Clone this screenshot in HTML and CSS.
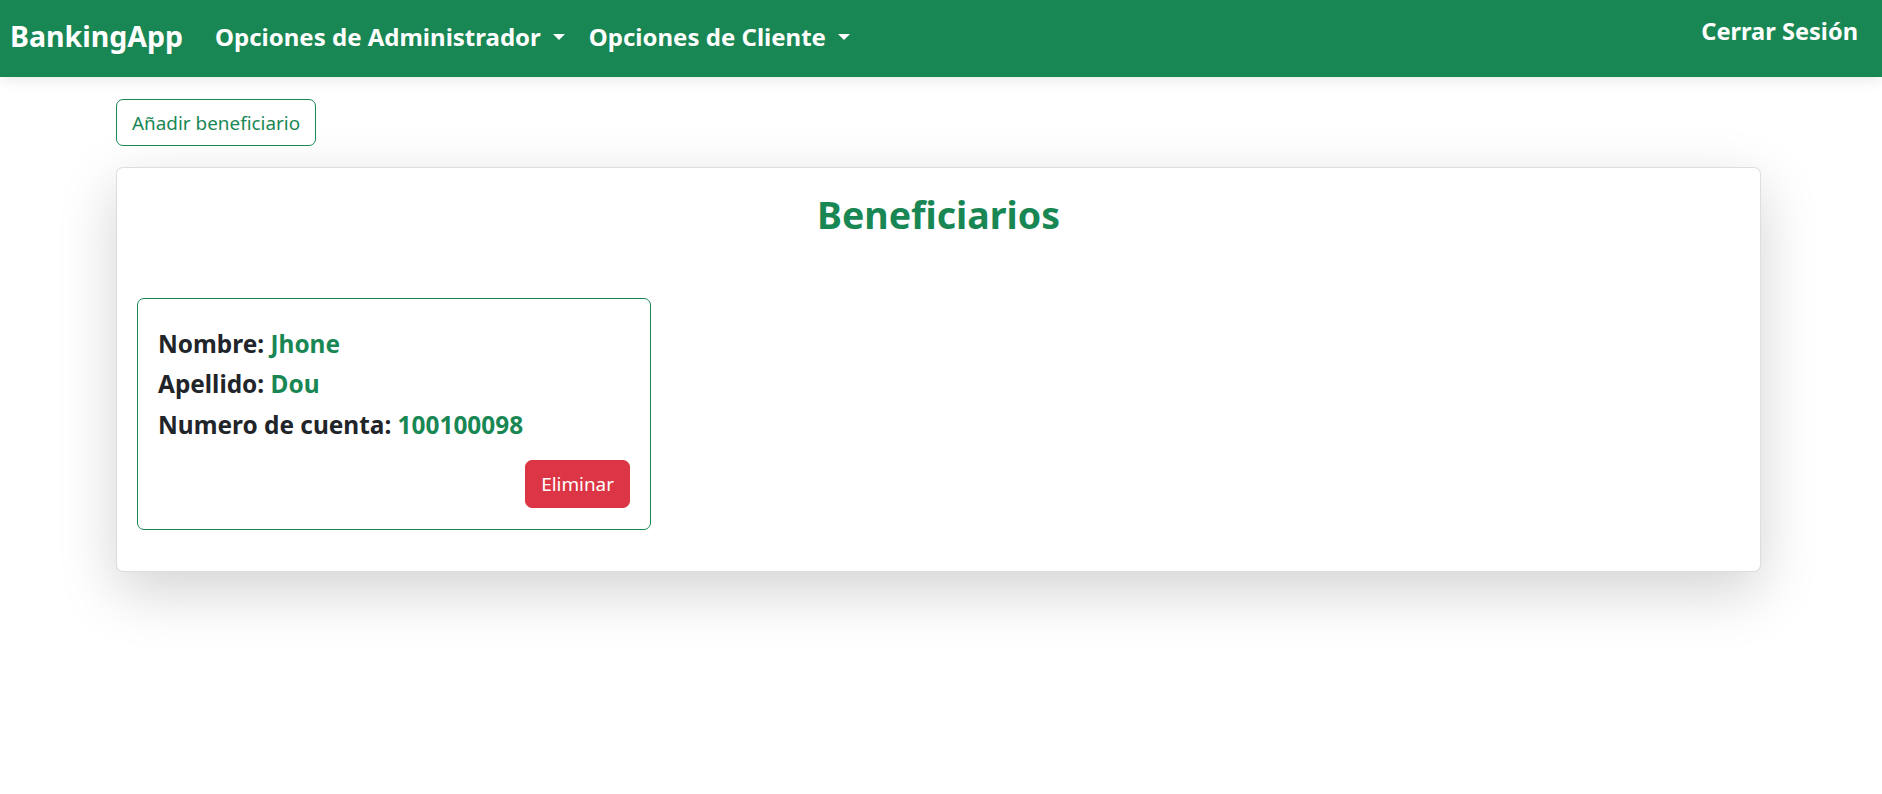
FILE: index.html
```html
<!DOCTYPE html>
<html lang="es">
<head>
<meta charset="utf-8">
<title>BankingApp - Beneficiarios</title>
<link rel="stylesheet" href="styles.css">
</head>
<body>
<nav class="navbar">
  <a class="brand" href="#">BankingApp</a>
  <ul class="nav-menu">
    <li class="nav-item"><a class="dropdown-toggle" href="#">Opciones de Administrador<span class="caret"></span></a></li>
    <li class="nav-item"><a class="dropdown-toggle" href="#">Opciones de Cliente<span class="caret"></span></a></li>
  </ul>
  <a class="logout" href="#">Cerrar Sesión</a>
</nav>
<main class="content">
  <button class="btn-outline" type="button">Añadir beneficiario</button>
  <section class="panel">
    <h2 class="panel-title">Beneficiarios</h2>
    <div class="beneficiary-grid">
      <article class="beneficiary">
        <h5 class="field">Nombre: <span class="value">Jhone</span></h5>
        <h5 class="field">Apellido: <span class="value">Dou</span></h5>
        <h5 class="field">Numero de cuenta: <span class="value">100100098</span></h5>
        <div class="actions"><button class="btn-danger" type="button">Eliminar</button></div>
      </article>
    </div>
  </section>
</main>
</body>
</html>
```
FILE: styles.css
```css
* { box-sizing: border-box; }

html, body { min-height: 100%; }

body {
  margin: 0;
  min-height: 100vh;
  font-family: "Noto Sans", "Open Sans", sans-serif;
  color: #212529;
  background: #fff;
}

a { text-decoration: none; color: inherit; }

.navbar {
  display: flex;
  align-items: flex-start;
  height: 77px;
  padding: 0 24px 0 10px;
  background: #198754;
  color: #fff;
  box-shadow: 0 4px 12px rgba(0, 0, 0, 0.08);
  position: relative;
  z-index: 1;
}

.brand {
  font-size: 28.5px;
  font-weight: 700;
  line-height: 1;
  padding-top: 22px;
  margin-right: 32px;
}

.nav-menu {
  display: flex;
  list-style: none;
  margin: 0;
  padding: 0;
  flex: 1;
}

.nav-item { margin-right: 23.5px; }

.dropdown-toggle {
  display: inline-block;
  font-size: 24px;
  font-weight: 700;
  line-height: 1;
  padding-top: 25px;
}

.caret {
  display: inline-block;
  vertical-align: 0.255em;
  margin-left: 12.5px;
  border-top: 6.5px solid #fff;
  border-left: 6.3px solid transparent;
  border-right: 6.3px solid transparent;
}

.logout {
  font-size: 23.6px;
  font-weight: 700;
  line-height: 1;
  padding-top: 20px;
}

.content {
  padding: 22px 121px 120px 116px;
}

.btn-outline {
  display: inline-flex;
  align-items: center;
  height: 47px;
  padding: 0 15px;
  font-family: inherit;
  font-size: 18.9px;
  color: #198754;
  background: #fff;
  border: 1px solid #198754;
  border-radius: 7px;
}

.panel {
  margin-top: 21px;
  padding: 28px 20px 41px;
  border: 1px solid rgba(0, 0, 0, 0.13);
  border-radius: 7px;
  background: #fff;
  box-shadow: 0 19px 58px rgba(0, 0, 0, 0.175);
}

.panel-title {
  margin: 0 0 64.5px;
  text-align: center;
  font-size: 37.5px;
  font-weight: 700;
  line-height: 1;
  color: #198754;
}

.beneficiary-grid {
  display: flex;
}

.beneficiary {
  width: 514px;
  padding: 31px 20px 21px;
  border: 1px solid #198754;
  border-radius: 7px;
}

.field {
  margin: 0 0 11.5px;
  font-size: 24.4px;
  font-weight: 700;
  line-height: 1.18;
  color: #212529;
}

.value { color: #198754; }

.actions {
  display: flex;
  justify-content: flex-end;
  margin-top: 21px;
}

.btn-danger {
  display: inline-flex;
  align-items: center;
  height: 48px;
  padding: 0 15px;
  font-family: inherit;
  font-size: 18.9px;
  color: #fff;
  background: #dc3545;
  border: 1px solid #dc3545;
  border-radius: 7px;
}
```
